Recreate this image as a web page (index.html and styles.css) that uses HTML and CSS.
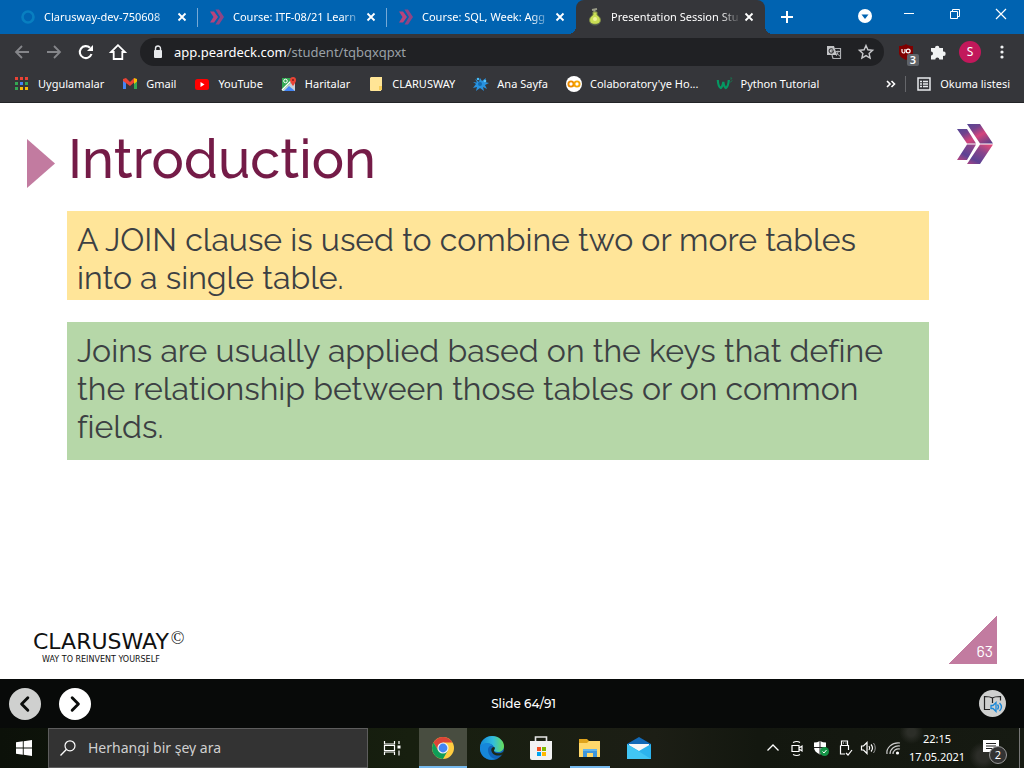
FILE: index.html
```html
<!DOCTYPE html>
<html lang="tr">
<head>
<meta charset="utf-8">
<meta name="viewport" content="width=device-width, initial-scale=1">
<title>Presentation Session Student</title>
<link rel="stylesheet" href="styles.css">
</head>
<body>
<svg class="defs" aria-hidden="true">
  <defs>
    <symbol id="close" viewBox="0 0 16 16"><path d="M4.500 4.500l7 7M11.500 4.500l-7 7" stroke="#fff" stroke-width="1.800" fill="none"/></symbol>
    <linearGradient id="brandA" x1="0" y1="0" x2="1" y2="1"><stop offset="0" stop-color="#44499b"/><stop offset=".35" stop-color="#71438d"/><stop offset=".6" stop-color="#d4447c"/><stop offset="1" stop-color="#4c408b"/></linearGradient>
    <linearGradient id="brandB" x1="0" y1="1" x2="1" y2="0"><stop offset="0" stop-color="#e54677"/><stop offset=".35" stop-color="#5c4294"/><stop offset=".65" stop-color="#88458c"/><stop offset="1" stop-color="#ee4b77"/></linearGradient>
    <symbol id="brand" viewBox="0 0 36 40"><path d="M0 5h10l9 14.500H10zM10 0h13l13 19.500H23z" fill="url(#brandA)"/><path d="M0 36h10l9-15.500H10zM10 40h13l13-19.500H23z" fill="url(#brandB)"/></symbol>
    <symbol id="brand-small" viewBox="0 0 16 16"><path d="M1 2.500h4L9 8l-4 5.500H1L4.500 8z" fill="#b8447c"/><path d="M6.500 0.500H10L15 8l-5 7.500H6.500L11 8z" fill="#8f4585"/></symbol>
  </defs>
</svg>

<header class="browser">
  <div class="tabstrip">
    <div class="tabs" role="tablist">
      <div class="tab"><svg class="i16" viewBox="0 0 16 16"><circle cx="8" cy="8" r="5.500" fill="none" stroke="#087fc0" stroke-width="2.600"/></svg><button class="tab-title" role="tab">Clarusway-dev-750608</button><button class="tab-close" aria-label="Kapat"><svg><use href="#close"/></svg></button></div>
      <div class="tab"><svg class="i16"><use href="#brand-small"/></svg><button class="tab-title" role="tab">Course: ITF-08/21 Learn</button><button class="tab-close" aria-label="Kapat"><svg><use href="#close"/></svg></button></div>
      <div class="tab"><svg class="i16"><use href="#brand-small"/></svg><button class="tab-title" role="tab">Course: SQL, Week: Agg</button><button class="tab-close" aria-label="Kapat"><svg><use href="#close"/></svg></button></div>
      <div class="tab active"><svg class="i16" viewBox="0 0 16 16"><path d="M5 1l5-1M7.500 1v4" stroke="#9a9c87" stroke-width="2"/><path d="M6 3h4v3c3 2 4 4 3 7-1 3-9 3-10 0-1-3 0-5 3-7z" fill="#c9de55" stroke="#7f8c49"/><circle cx="8" cy="10" r="2" fill="#eef29a"/><path d="M3 14l3 2h4l3-2" stroke="#4f5a55" fill="none"/></svg><button class="tab-title" role="tab" aria-selected="true">Presentation Session Stu</button><button class="tab-close" aria-label="Kapat"><svg><use href="#close"/></svg></button></div>
    </div>
    <button class="new-tab" aria-label="Yeni sekme"><svg viewBox="0 0 16 16"><path d="M8 2v12M2 8h12" stroke="#fff" stroke-width="2"/></svg></button>
    <div class="window-buttons">
      <button aria-label="Sekme ara"><svg viewBox="0 0 16 16"><circle cx="8" cy="9" r="7" fill="#fff"/><path d="M4.500 7.500h7L8 12z" fill="#0063b1"/></svg></button>
      <button aria-label="Küçült"><svg viewBox="0 0 16 16"><path d="M3 6.500h10" stroke="#fff"/></svg></button>
      <button aria-label="Geri yükle"><svg viewBox="0 0 16 16"><path d="M3.500 4.500h7v7h-7zM5.500 4.500v-2h7v7h-2" fill="none" stroke="#fff"/></svg></button>
      <button aria-label="Pencereyi kapat"><svg viewBox="0 0 16 16"><path d="M3 2l10 10M13 2L3 12" stroke="#fff" stroke-width="1.200"/></svg></button>
    </div>
  </div>

  <div class="toolbar">
    <button aria-label="Geri"><svg viewBox="0 0 16 16"><path d="M15 8H2M8 2L2 8l6 6" fill="none" stroke="#85868a" stroke-width="1.800"/></svg></button>
    <button aria-label="İleri"><svg viewBox="0 0 16 16"><path d="M1 8h13M8 2l6 6-6 6" fill="none" stroke="#85868a" stroke-width="1.800"/></svg></button>
    <button aria-label="Yenile"><svg viewBox="0 0 16 16"><path d="M13.500 10A6 6 0 1 1 12 3.800" fill="none" stroke="#fff" stroke-width="2.100"/><path d="M15 1v6H9z" fill="#fff"/></svg></button>
    <button aria-label="Ana sayfa"><svg viewBox="0 0 16 16"><path d="M8 1.200L1 8h2.700v7h8.600V8H15z" fill="none" stroke="#fff" stroke-width="1.800"/></svg></button>
    <div class="omnibox">
      <svg class="i16" viewBox="0 0 16 16"><rect x="4" y="6" width="8" height="8" rx="1" fill="#e8eaed"/><path d="M5.500 7V4.500a2.500 2.500 0 0 1 5 0V7" fill="none" stroke="#e8eaed" stroke-width="1.400"/></svg>
      <label class="host" for="path">app.peardeck.com</label>
      <input id="path" type="text" value="/student/tqbqxqpxt">
      <button aria-label="Çevir"><svg viewBox="0 0 16 16"><path d="M1 2h7l3 9H1z" fill="#c3c4c6"/><path d="M8.500 4.500h6v10H7l-1-3.500" fill="none" stroke="#aeb0b3" stroke-width="1.200"/><path d="M7 5.500A2.200 2.200 0 1 0 7.500 7H5.500" fill="none" stroke="#333437" stroke-width="1.100"/><path d="M10 7.500h4M12 6.500v1c0 2-1 3.500-2 4.500M11 8.500c0 1.500 2 3 3 3.500" fill="none" stroke="#aeb0b3"/></svg></button>
      <button aria-label="Yer işareti ekle"><svg viewBox="0 0 16 16"><path d="M8 1.500l1.900 4.300 4.700.5-3.500 3.100 1 4.600L8 11.600 3.900 14l1-4.600L1.400 6.300l4.700-.5z" fill="none" stroke="#c8c9cc" stroke-width="1.400"/></svg></button>
    </div>
    <div class="extensions">
      <button class="shield" aria-label="uBlock"><svg viewBox="0 0 16 16"><path d="M8 0c2 1.500 4 2 7 2v7c0 3-3 5-7 7-4-2-7-4-7-7V2c3 0 5-.5 7-2z" fill="#800000"/><path d="M4 5v2.500a1.500 1.500 0 0 0 3 0V5" fill="none" stroke="#fff" stroke-width="1.200"/><circle cx="10.200" cy="7" r="1.900" fill="none" stroke="#fff" stroke-width="1.200"/></svg><span class="count">3</span></button>
      <button aria-label="Uzantılar"><svg viewBox="0 0 16 16"><path d="M1 4h4a2.200 2.200 0 1 1 4.400 0H13v3.500a2.200 2.200 0 1 1 0 4.300V15.500H9.300a2 2 0 0 0-4 0H1v-4a2 2 0 0 0 0-4z" fill="#f1f3f4"/></svg></button>
      <button class="avatar">S</button>
      <button aria-label="Menü"><svg viewBox="0 0 16 16" fill="#f1f3f4"><circle cx="8" cy="3" r="1.600"/><circle cx="8" cy="8" r="1.600"/><circle cx="8" cy="13" r="1.600"/></svg></button>
    </div>
  </div>

  <nav class="bookmarks">
    <a href="#"><svg class="i16" viewBox="0 0 16 16"><g fill="#ea4335"><path d="M1 1h3v3H1zM6 1h3v3H6zM11 1h3v3h-3z"/></g><path d="M1 6h3v3H1zM1 11h3v3H1z" fill="#34a853"/><path d="M6 6h3v3H6z" fill="#4285f4"/><path d="M11 6h3v3h-3z" fill="#34a853"/><path d="M6 11h3v3H6zM11 11h3v3h-3z" fill="#fbbc05"/></svg>Uygulamalar</a>
    <a href="#"><svg class="i16" viewBox="0 0 16 16"><path d="M1 4v9h3V6z" fill="#4285f4"/><path d="M15 4v9h-3V6z" fill="#34a853"/><path d="M1 3l3-1 4 4 4-4v4.500L8 10 1 5z" fill="#ea4335"/><path d="M12 2l3 1v2.500L12 8z" fill="#fbbc05"/></svg>Gmail</a>
    <a href="#"><svg class="i16" viewBox="0 0 16 16"><rect x="1" y="3" width="14" height="11" rx="2.500" fill="#f00"/><path d="M6.500 6v5l4-2.500z" fill="#fff"/></svg>YouTube</a>
    <a href="#"><svg class="i16" viewBox="0 0 16 16"><path d="M1 2h13v13H1z" fill="#34a853"/><path d="M1 15L14 3v12z" fill="#c9d0d8"/><path d="M3 15l5-5 6 5z" fill="#4285f4"/><path d="M1 14L13 2" stroke="#fff" stroke-width="1.500"/><circle cx="4.500" cy="5" r="1.800" fill="none" stroke="#fff"/><path d="M12 10C9 6 9 5 9 4a3 3 0 0 1 6 0c0 1 0 2-3 6z" fill="#ea4335"/><circle cx="12" cy="4" r="1" fill="#802018"/></svg>Haritalar</a>
    <a href="#"><svg class="i16" viewBox="0 0 16 16"><path d="M3 1h11v9l-1 5H3a1 1 0 0 1-1-1V2z" fill="#ffe596"/><path d="M11 14v-4h3v4z" fill="#f6cc58"/></svg>CLARUSWAY</a>
    <a href="#"><svg class="i16" viewBox="0 0 16 16"><path d="M2 3l4 3 1-4 2 3 4-3-1 4 4 1-4 2 2 4-4-2 1 4-4-3-4 3 1-4-4 1 3-4-3-2 4 .5z" fill="#2892df"/><circle cx="5" cy="3" r="1.300" fill="#45baf5"/><circle cx="12" cy="5" r="1.300" fill="#58c6ff"/><circle cx="7" cy="8" r="2" fill="#126bb1"/></svg>Ana Sayfa</a>
    <a href="#"><svg class="i16" viewBox="0 0 16 16"><circle cx="8" cy="8" r="8" fill="#fff"/><circle cx="5" cy="8" r="2.600" fill="none" stroke="#ed8b00" stroke-width="1.900"/><circle cx="11" cy="8" r="2.600" fill="none" stroke="#f5a500" stroke-width="1.900"/></svg>Colaboratory'ye Ho...</a>
    <a href="#"><svg class="i16" viewBox="0 0 16 16"><path d="M.8 4c.2 4 1 7 3 8 1.500-1 2-3 2.500-6 .5 3 1 5 2.500 6 1.800-1 2.700-4 3-8" fill="none" stroke="#059862" stroke-width="2.200"/><path d="M13 2h2l-1 1.500 1 1-1 1.500h-1" stroke="#17734f" fill="none" stroke-width=".8"/></svg>Python Tutorial</a>
    <div class="bookmarks-end">
      <button class="more" aria-label="Diğer yer işaretleri"><svg viewBox="0 0 16 16"><path d="M4 5l3 3-3 3M8.500 5l3 3-3 3" fill="none" stroke="#fff" stroke-width="1.600"/></svg></button>
      <a class="reading" href="#"><svg class="i16" viewBox="0 0 16 16"><path d="M2 2h12v12H2z" fill="none" stroke="#e8eaed" stroke-width="1.500"/><path d="M4 5.500h2M7 5.500h5M4 8h2M7 8h5M4 10.500h2M7 10.500h5" stroke="#e8eaed" stroke-width="1.300"/></svg>Okuma listesi</a>
    </div>
  </nav>
</header>

<main class="slide">
  <div class="slide-head">
    <svg class="marker" viewBox="0 0 28 49"><path d="M0 0l28 24.500L0 49z" fill="#c27ba0"/></svg>
    <h1>Introduction</h1>
    <svg class="logo"><use href="#brand"/></svg>
  </div>
  <p class="note yellow">A JOIN clause is used to combine two or more tables<br>into a single table.</p>
  <p class="note green">Joins are usually applied based on the keys that define<br>the relationship between those tables or on common<br>fields.</p>
  <footer class="slide-foot">
    <div class="wordmark"><div class="name">CLARUSWAY<sup>©</sup></div><div class="motto">WAY TO REINVENT YOURSELF</div></div>
    <div class="page-number">63</div>
  </footer>
</main>

<div class="player">
  <div class="player-nav">
    <button class="round dim" aria-label="Önceki slayt"><svg viewBox="0 0 16 16"><path d="M10.500 2.500L5 8l5.500 5.500" fill="none" stroke="#0a0c0b" stroke-width="2.600" stroke-linecap="round" stroke-linejoin="round"/></svg></button>
    <button class="round" aria-label="Sonraki slayt"><svg viewBox="0 0 16 16"><path d="M5.500 2.500L11 8l-5.500 5.500" fill="none" stroke="#0a0c0b" stroke-width="2.600" stroke-linecap="round" stroke-linejoin="round"/></svg></button>
  </div>
  <span class="counter">Slide 64/91</span>
  <button class="reader" aria-label="Sesli okuyucu"><svg viewBox="0 0 27 27"><path d="M13.500 8C11 6.500 8 6.500 5.500 6.500v13H11M13.500 8c2-1.500 5-1.500 8-1.500v4M13.500 8v5" fill="none" stroke="#222" stroke-width="1.200"/><path d="M12 15.500h2l3-3v9l-3-3h-2z" fill="none" stroke="#1687d9" stroke-width="1.300"/><path d="M18.500 14.500q2 2.500 0 5M20.500 13q4 4 0 8" fill="none" stroke="#1687d9" stroke-width="1.300"/></svg></button>
</div>

<footer class="taskbar">
  <button class="slot" aria-label="Başlat"><svg class="i16" viewBox="0 0 16 16"><path d="M0 2.300L6.800 1.300v6.300H0zM7.700 1.200L16 0v7.600H7.700zM0 8.400h6.800v6.300L0 13.700zM7.700 8.400H16V16l-8.300-1.200z" fill="#fff"/></svg></button>
  <label class="search"><svg class="i16" viewBox="0 0 16 16"><circle cx="10" cy="5.800" r="5" fill="none" stroke="#fff" stroke-width="1.200"/><path d="M6.300 9.500L.5 15.500" stroke="#fff" stroke-width="1.300"/></svg><input type="text" placeholder="Herhangi bir şey ara" aria-label="Ara"></label>
  <button class="slot" aria-label="Görev görünümü"><svg class="i16" viewBox="0 0 16 16"><path d="M.5 1v3h10V1M.5 15v-3h10v3M.5 5.500h10v5H.5zM15 1v3M15 10.500v5" fill="none" stroke="#fff" stroke-width="1.200"/><path d="M13.500 5.500h3v3h-3z" fill="#fff"/></svg></button>
  <div class="apps">
    <button class="slot current" aria-label="Chrome"><svg class="i24" viewBox="0 0 24 24"><circle cx="12" cy="12" r="11" fill="#ffcd40"/><path d="M2.500 6.500A11 11 0 0 1 21.500 6.500H12L7.200 14.700z" fill="#db4437"/><path d="M2.500 6.500A11 11 0 0 0 12 23l4.700-8.200H7.300z" fill="#0f9d58"/><circle cx="12" cy="12" r="5.600" fill="#f1f1f1"/><circle cx="12" cy="12" r="4.400" fill="#4285f4"/></svg></button>
    <button class="slot" aria-label="Edge"><svg class="i24" viewBox="0 0 24 24"><defs><linearGradient id="edge" x1="0" y1=".5" x2="1" y2=".5"><stop offset="0" stop-color="#1389d9"/><stop offset=".55" stop-color="#32bddd"/><stop offset="1" stop-color="#68df57"/></linearGradient></defs><circle cx="12" cy="12" r="12" fill="#1063b8"/><path d="M0 11C1 4 6 0 12 0c7 0 12 5 12 10 0 4-3 6-6 6-3 0-4-1-4-2 1-1 1-2 0-3C11 6 3 7 0 11z" fill="url(#edge)"/><path d="M0 11c3-5 10-5 13-1-3-1-5 1-5 4 0 5 4 9 8 9C8 26-1 20 0 11z" fill="#1687da"/><path d="M24.500 15C22 17 20 17.500 18 17.300c-3 0-4.500-1.800-4-3.300 1-1 1-2 .3-3-2 0-3.300 1.500-3 3.500.5 3 3.500 5 6.700 5 2 0 3.500-.3 5-1.500z" fill="#1e2815"/></svg></button>
    <button class="slot" aria-label="Mağaza"><svg class="i24" viewBox="0 0 24 24"><path d="M6.500 6V1h11v5" fill="none" stroke="#e5e5e5" stroke-width="1.600"/><path d="M1 5h22v17a2 2 0 0 1-2 2H3a2 2 0 0 1-2-2z" fill="#f2f2f2"/><path d="M8 11h4v4H8z" fill="#f25022"/><path d="M13 11h4v4h-4z" fill="#7fba00"/><path d="M8 16h4v4H8z" fill="#00a4ef"/><path d="M13 16h4v4h-4z" fill="#ffb900"/></svg></button>
    <button class="slot open" aria-label="Dosya Gezgini"><svg class="i24" viewBox="0 0 24 24"><path d="M1 3h8l2 2h11v4H1z" fill="#dfa31c"/><path d="M1 7l8 0 2-2h11v16H1z" fill="#ffd86b"/><path d="M5 13h14v8h-4v-4H9v4H5z" fill="#3e96dc"/><path d="M5 13h14v2H5z" fill="#63b5ec"/></svg></button>
    <button class="slot" aria-label="Posta"><svg class="i24" viewBox="0 0 24 24"><path d="M0 8l12-7 12 7v5H0z" fill="#1269b7"/><path d="M2 8h20v7H2z" fill="#f7f7f7"/><path d="M0 8l12 7 12-7v15H0z" fill="#2cb3ee"/><path d="M0 8l24 15H0z" fill="#41c5f4"/></svg></button>
  </div>
  <div class="tray">
    <button aria-label="Gizli simgeler"><svg viewBox="0 0 16 16"><path d="M2.500 10.500L8 5l5.500 5.500" fill="none" stroke="#fff" stroke-width="1.300"/></svg></button>
    <button aria-label="Kamera"><svg viewBox="0 0 16 16"><path d="M3 5.500h7v6H3zM10 8l3-2v5l-3-2M4 2.500q4-2 7 0M4 14.500q4 2 7 0" fill="none" stroke="#fff" stroke-width="1.200"/></svg></button>
    <button aria-label="Güvenlik"><svg viewBox="0 0 16 16"><path d="M7 1c2 1 4 1.500 6 1.500v5c0 3-2 5-6 7-4-2-6-4-6-7v-5C3 2.500 5 2 7 1z" fill="#fff"/><path d="M7 1v13M1 7.500h12" stroke="#222"/><circle cx="11.500" cy="11.500" r="4.500" fill="#159447"/><path d="M9.500 11.500l1.500 1.500 2.500-3" fill="none" stroke="#fff"/></svg></button>
    <button aria-label="USB"><svg viewBox="0 0 16 16"><path d="M4.500 5V1h6v4M3.500 5.500h8V10M3.500 5.500V14H8M9 13l2 2 4-5" fill="none" stroke="#fff" stroke-width="1.200"/><path d="M6 3h1M8.500 3h1" stroke="#fff"/></svg></button>
    <button aria-label="Ses"><svg viewBox="0 0 16 16"><path d="M.5 6h2L6 2.500v11L2.500 10h-2z" fill="none" stroke="#fff" stroke-width="1.200"/><path d="M8 6q1.500 2 0 4M10 4.500q3 3.500 0 7" fill="none" stroke="#fff" stroke-width="1.200"/><path d="M12.500 3q3.500 5 0 10" fill="none" stroke="#999"/></svg></button>
    <button aria-label="Wi-Fi"><svg viewBox="0 0 16 16"><path d="M2 14C1 8 7 2 15 3M5 14c0-5 5-9 10-8M8 14c0-3 3-6 7-5" fill="none" stroke="#ccc" stroke-width="1.200"/><circle cx="12.500" cy="13" r="1.600" fill="#fff"/></svg></button>
    <button class="clock"><span>22:15</span><span>17.05.2021</span></button>
    <button class="alerts" aria-label="Bildirimler"><svg viewBox="0 0 16 16"><path d="M0 0h16v12h-5v4l-4-4H0z" fill="#fff"/><path d="M3 3.500h10M3 6h10M3 8.500h7" stroke="#222"/></svg><span class="badge">2</span></button>
    <span class="desktop"></span>
  </div>
</footer>
</body>
</html>
```

FILE: styles.css
```css
* { box-sizing: border-box; }

body {
  margin: 0;
  min-height: 100vh;
  display: flex;
  flex-direction: column;
  background: #fff;
  color: #fff;
  font: 11px/16px "Noto Sans", "Open Sans", sans-serif;
}

button {
  display: flex;
  align-items: center;
  justify-content: center;
  padding: 0;
  border: 0;
  background: none;
  color: inherit;
  font: inherit;
}

button svg { width: 16px; height: 16px; }
input { min-width: 0; border: 0; background: none; font: inherit; outline: 0; }
a { color: inherit; text-decoration: none; }
svg { flex: none; display: block; overflow: visible; }
.defs { position: absolute; width: 0; height: 0; }
.i16 { width: 16px; height: 16px; }
button .i24 { width: 24px; height: 24px; }

/* Tab strip */
.tabstrip {
  display: flex;
  height: 34px;
  padding-left: 9px;
  background: #0063b1;
}
.tabs { display: flex; flex: 0 1 756px; min-width: 0; }
.tab {
  position: relative;
  flex: 1 1 0;
  min-width: 0;
  display: flex;
  align-items: center;
  gap: 8px;
  padding: 0 8px 0 11px;
}
.tab:nth-child(-n+2)::after {
  content: "";
  position: absolute;
  right: 0;
  top: 8px;
  width: 1px;
  height: 19px;
  background: #76a9d6;
}
.tab-title {
  flex: 1;
  min-width: 0;
  justify-content: flex-start;
  white-space: nowrap;
  mask-image: linear-gradient(90deg, #000 84%, transparent);
}
.tab-close { width: 16px; margin-left: -8px; }
.active { background: #35363a; border-radius: 8px 8px 0 0; }
.active::before, .active::after {
  content: "";
  position: absolute;
  bottom: 0;
  width: 8px;
  height: 8px;
}
.active::before { left: -8px; background: radial-gradient(circle at 0 0, transparent 8px, #35363a 8px); }
.active::after { right: -8px; background: radial-gradient(circle at 100% 0, transparent 8px, #35363a 8px); }
.new-tab { width: 44px; }
.window-buttons { display: flex; margin-left: auto; }
.window-buttons button { width: 46px; height: 30px; }
.window-buttons button:first-child { width: 42px; }

/* Toolbar */
.toolbar {
  display: flex;
  align-items: center;
  height: 36px;
  padding: 0 6px;
  background: #35363a;
}
.toolbar button { width: 32px; height: 28px; }
.omnibox {
  flex: 1;
  min-width: 0;
  display: flex;
  align-items: center;
  height: 28px;
  margin-left: 6px;
  padding: 0 2px 0 10px;
  border-radius: 14px;
  background: #202124;
  font-size: 13px;
}
.host { margin-left: 8px; }
.omnibox input { flex: 1; padding: 0; color: #9aa0a6; }
.extensions { display: flex; align-items: center; margin-left: 6px; }
.toolbar .shield { position: relative; }
.count {
  position: absolute;
  right: 3px;
  bottom: 0;
  width: 12px;
  border-radius: 2px;
  background: #5f6368;
  font-weight: 600;
  line-height: 12px;
}
.toolbar .avatar { width: 22px; height: 22px; margin: 0 5px; border-radius: 50%; background: #c2185b; font-size: 12px; }

/* Bookmarks */
.bookmarks {
  display: flex;
  gap: 18px;
  height: 33px;
  padding: 0 14px 5px;
  border-bottom: 1px solid #232427;
  background: #35363a;
  white-space: nowrap;
}
.bookmarks a { display: flex; align-items: center; gap: 8px; }
.bookmarks-end { display: flex; align-items: center; gap: 6px; margin-left: auto; }
.reading { padding-left: 10px; border-left: 1px solid #65666a; }

/* Slide */
.slide {
  flex: 1;
  display: flex;
  flex-direction: column;
  padding: 21px 27px 15px;
  color: #3c4043;
}
.slide-head { display: flex; height: 87px; gap: 13px; }
.marker { width: 28px; height: 49px; margin-top: 15px; }
.slide h1 {
  flex: 1;
  margin: 0;
  color: #741b47;
  font: 500 54px/70px Raleway, Lato, sans-serif;
}
.logo { width: 36px; height: 40px; margin-right: 4px; }
.note {
  margin: 0 68px 22px 40px;
  padding: 10px 10px 3px;
  font: 400 32px/38px Raleway, "Open Sans", sans-serif;
}
.yellow { background: #ffe599; }
.green { padding-bottom: 14px; background: #b6d7a8; }
.slide-foot {
  display: flex;
  align-items: flex-end;
  justify-content: space-between;
  margin-top: auto;
}
.wordmark { padding-left: 6px; color: #111; font-family: "DejaVu Sans", sans-serif; }
.name { padding-bottom: 2px; font-size: 22px; line-height: 24px; }
.name sup { font: 18px/16px "Liberation Serif", serif; vertical-align: 5px; margin-left: 2px; }
.motto { padding-left: 9px; font-size: 8px; line-height: 8px; }
.page-number {
  width: 48px;
  height: 48px;
  padding: 26px 4px 0;
  background: linear-gradient(135deg, transparent 50%, #c27ba0 50%);
  color: #fff;
  font: 400 16px/18px Barlow, Roboto, sans-serif;
  text-align: right;
}

/* Player bar */
.player {
  display: grid;
  grid-template-columns: 1fr auto 1fr;
  align-items: center;
  height: 49px;
  padding: 0 18px 0 9px;
  background: #080a09;
}
.player-nav { display: flex; gap: 18px; }
.round { width: 32px; height: 32px; border-radius: 50%; background: #fff; }
.round svg { width: 18px; height: 18px; }
.dim { background: #cfd0cf; }
.counter { padding-left: 32px; font-family: Montserrat, Inter, sans-serif; font-size: 12px; font-weight: 500; }
.reader { justify-self: end; width: 27px; height: 27px; border-radius: 50%; background: #cfd0cf; }
.reader svg { width: 27px; height: 27px; }

/* Taskbar */
.taskbar {
  display: flex;
  height: 40px;
  background:
    radial-gradient(circle at 89% 10%, #2c2e28 0 4px, transparent 12px),
    radial-gradient(circle at 96% 70%, #2c2d28 0 6px, transparent 14px),
    linear-gradient(90deg, #0c1109, #171f0f 40%, #1c1e15 64%, #13170f 74%, #161a12);
}
.slot { width: 48px; }
.search {
  flex: 0 1 320px;
  display: flex;
  align-items: center;
  gap: 12px;
  padding: 0 11px;
  border: 1px solid #5d5d5d;
  background: #333;
}
.search input { flex: 1; padding: 0; font-size: 14px; }
.search input::placeholder { color: #d0d0d0; opacity: 1; }
.apps { display: flex; gap: 1px; margin-left: 3px; }
.current { background: #484d40; border-bottom: 2px solid #76b9ed; border-top: 2px solid transparent; }
.open { background: linear-gradient(#76b9ed, #76b9ed) center bottom / 40px 2px no-repeat; }
.tray { display: flex; margin-left: auto; }
.tray button { width: 24px; }
.tray .clock { width: 64px; flex-direction: column; line-height: 18px; }
.tray .alerts { position: relative; width: 50px; padding-right: 6px; }
.badge {
  position: absolute;
  right: 12px;
  bottom: 4px;
  width: 18px;
  border: 1px solid #999;
  border-radius: 50%;
  background: #333;
  line-height: 16px;
}
.desktop { width: 5px; border-left: 1px solid #777; }
```
